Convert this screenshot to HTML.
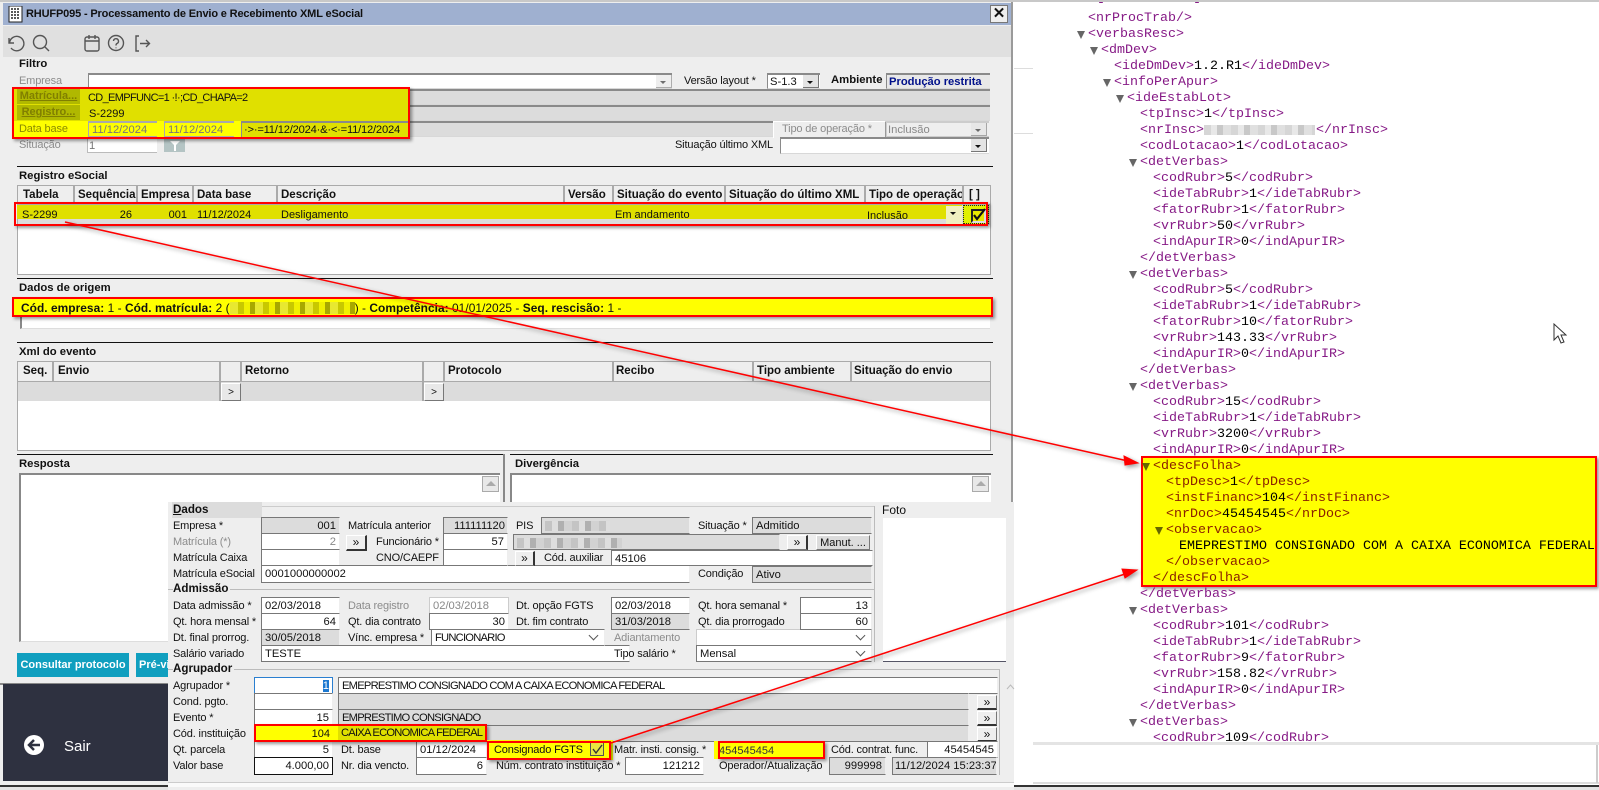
<!DOCTYPE html>
<html><head><meta charset="utf-8"><title>RHUFP095</title>
<style>
html,body{margin:0;padding:0;background:#fff}
#p{position:relative;width:1599px;height:790px;overflow:hidden;background:#fff;font:11px "Liberation Sans",sans-serif;color:#111}
#p div,#p span.a{position:absolute;box-sizing:border-box}
.l{white-space:nowrap;height:14px;line-height:14px;margin-top:1px;letter-spacing:-.15px}
.h{font-weight:bold;font-size:11.3px;white-space:nowrap;height:14px;line-height:14px;color:#111}
.d{color:#8c8c8c}
.f{background:#fff;border-top:2px solid #8a8a8a;border-left:1px solid #8a8a8a;border-bottom:1px solid #d8d8d8;padding:0 3px;line-height:14px;white-space:nowrap;overflow:hidden;font-size:11.2px}
.o{background:#fff;border-top:1px solid #777;border-left:1px solid #777;border-bottom:1px solid #777;border-right:1px solid #eee;padding:0 3px;line-height:16px;white-space:nowrap;overflow:hidden;font-size:11.2px}
.u{letter-spacing:-.78px}
.g{background:#dcdcdc}
.r{text-align:right}
.e{background:#eee;border-color:#ccc}
.b{background:#e8e8e8;border-right:1px solid #777;border-bottom:1px solid #777;border-top:1px solid #fff;border-left:1px solid #fff;text-align:center;font-size:12px;line-height:12px}
.s{height:1px;background:#111}
.rb{border:2px solid #f00;box-shadow:2px 2px 3px rgba(0,0,0,.4)}
.c{border-right:2px solid #aaa;height:19px;top:0}
.hd{font-weight:bold;font-size:11.5px;white-space:nowrap;line-height:14px;height:14px}
.x{font:13.33px/16px "Liberation Mono",monospace;color:#861a86;white-space:pre;height:16px}
.x em{font-style:normal;color:#000}
.t{width:0;height:0;border-left:4.500px solid transparent;border-right:4.500px solid transparent;border-top:8px solid #666;margin-left:-11px;margin-top:4px;top:0}
.dd{background:#e4e4e4;border-right:1px solid #777;border-bottom:1px solid #777;width:16px;height:13px}
.dd:after{content:"";position:absolute;left:4px;top:6px;width:0;height:0;border-left:3px solid transparent;border-right:3px solid transparent;border-top:3px solid #111}
.ch:after{content:"";position:absolute;right:7px;top:2px;width:6px;height:6px;border-right:1px solid #555;border-bottom:1px solid #555;transform:rotate(45deg)}
.bl{background:repeating-linear-gradient(90deg,#c4c4c4 0 7px,#dedede 7px 13px,#b0b0b0 13px 19px,#d2d2d2 19px 27px)}
.sb{width:17px;height:16px;background:#e8e8e8;border:1px solid #aaa}
.sb:after{content:"";position:absolute;left:3px;top:4px;width:0;height:0;border-left:5px solid transparent;border-right:5px solid transparent;border-bottom:5px solid #aaa}
.bt{background:#109fbf;color:#fff;font:bold 11px/24px "Liberation Sans",sans-serif;white-space:nowrap;overflow:hidden}
</style></head><body><div id="p">

<!-- main window -->
<div style="left:0;top:0;width:1013px;height:790px;background:#eee;border-right:2px solid #9a9a9a"></div>
<div style="left:0;top:0;width:1599px;height:2px;background:#c8c8c8"></div>
<div style="left:3px;top:3px;width:1008px;height:22px;background:#9fb0d0"></div>
<svg style="position:absolute;left:8px;top:6px" width="16" height="17"><rect x="1" y="0" width="13" height="16" fill="#fff" stroke="#222"/><path d="M3 3h9M3 6h9M3 9h9M3 12h9" stroke="#222" stroke-width="1.600" stroke-dasharray="2 1"/></svg>
<div class="h" style="left:26px;top:7px;font-size:11px;letter-spacing:-.15px">RHUFP095 - Processamento de Envio e Recebimento XML eSocial</div>
<div style="left:990px;top:5px;width:18px;height:18px;background:#eee;border:1px solid #777;font:bold 15px/16px 'Liberation Sans';text-align:center">✕</div>
<div style="left:3px;top:26px;width:1008px;height:31px;background:#e0e0e0"></div>
<svg style="position:absolute;left:5px;top:33px" width="150" height="20" fill="none" stroke="#555" stroke-width="1.400"><path d="M4 5v5h5M4.500 10a7.200 7.200 0 1 1 1.500 5"/><circle cx="35" cy="9" r="6.500"/><path d="M40 14l4 4"/><rect x="80" y="4" width="14" height="14" rx="2"/><path d="M80 8h14M84 2v4M90 2v4"/><circle cx="111" cy="10" r="7.500"/><path d="M108.500 8a2.500 2.500 0 1 1 3.500 2.500c-.8.4-1 .8-1 2M111 14.500v.8"/><path d="M134 3h-3v15h3M135 10.500h9M141 7l3.500 3.500-3.500 3.500"/></svg>

<!-- filtro -->
<div class="h" style="left:19px;top:57px">Filtro</div>
<div class="l d" style="left:19px;top:73px">Empresa</div>
<div class="f" style="left:88px;top:73px;width:584px;height:16px"></div>
<div class="dd" style="left:656px;top:75px;opacity:.6"></div>
<div class="l" style="left:684px;top:73px">Versão layout *</div>
<div class="f" style="left:767px;top:73px;width:53px;height:16px;padding-left:2px">S-1.3</div>
<div class="dd" style="left:803px;top:75px"></div>
<div class="h" style="left:831px;top:73px">Ambiente</div>
<div class="f g" style="left:886px;top:73px;width:104px;height:16px;background:#e8e8e8;color:#00108a;font-weight:bold;padding-left:2px">Produção restrita</div>

<div class="f g" style="left:88px;top:89px;width:902px;height:16px"></div>
<div class="f g" style="left:88px;top:105px;width:902px;height:16px"></div>
<div class="f g" style="left:241px;top:121px;width:532px;height:16px"></div>
<div class="l d" style="left:19px;top:121px">Data base</div>
<div class="l d" style="left:782px;top:121px">Tipo de operação *</div>
<div class="f e" style="left:886px;top:121px;width:103px;height:16px;color:#888;padding-left:1px">Inclusão</div>
<div class="dd" style="left:971px;top:123px;opacity:.6"></div>
<div style="left:773px;top:121px;width:113px;height:17px;border-top:1px solid #fff;border-left:1px solid #fff;border-right:1px solid #999"></div>
<div class="l d" style="left:19px;top:137px">Situação</div>
<div class="f e" style="left:87px;top:137px;width:70px;height:16px;color:#777;background:#fff;border-color:#bbb;padding-left:1px">1</div>
<div style="left:164px;top:139px;width:21px;height:13px;background:#b4c4c4"></div>
<svg style="position:absolute;left:170px;top:141px" width="10" height="10"><path d="M0 0h10L6 4v6H4V4z" fill="#fff"/></svg>
<div class="l" style="left:675px;top:137px">Situação último XML</div>
<div class="f" style="left:780px;top:137px;width:209px;height:17px"></div>
<div class="dd" style="left:971px;top:139px"></div>

<!-- registro -->
<div class="s" style="left:17px;top:166px;width:976px"></div>
<div class="h" style="left:19px;top:169px">Registro eSocial</div>
<div style="left:17px;top:185px;width:974px;height:90px;background:#fff;border:1px solid #aaa">
 <div style="left:0;top:0;width:972px;height:19px;background:#eee;border-bottom:1px solid #aaa"></div>
 <div style="left:0;top:19px;width:972px;height:20px;background:#dcdcdc"></div>
 <div class="c" style="left:55px"></div><div class="c" style="left:118px"></div><div class="c" style="left:174px"></div><div class="c" style="left:258px"></div><div class="c" style="left:545px"></div><div class="c" style="left:594px"></div><div class="c" style="left:706px"></div><div class="c" style="left:846px"></div><div class="c" style="left:944px"></div>
</div>
<div class="hd" style="left:23px;top:188px">Tabela</div><div class="hd" style="left:78px;top:188px">Sequência</div><div class="hd" style="left:141px;top:188px">Empresa</div><div class="hd" style="left:197px;top:188px">Data base</div><div class="hd" style="left:281px;top:188px">Descrição</div><div class="hd" style="left:568px;top:188px">Versão</div><div class="hd" style="left:617px;top:188px">Situação do evento</div><div class="hd" style="left:729px;top:188px">Situação do último XML</div><div class="hd" style="left:869px;top:188px;width:93px;overflow:hidden">Tipo de operação</div><div class="hd" style="left:969px;top:188px">[ ]</div>

<!-- dados origem -->
<div class="s" style="left:17px;top:278px;width:976px"></div>
<div class="h" style="left:19px;top:281px">Dados de origem</div>
<div style="left:20px;top:298px;width:970px;height:31px;background:#fff;border-left:2px solid #888;border-bottom:1px solid #ddd"></div>

<!-- xml evento -->
<div class="s" style="left:17px;top:342px;width:976px"></div>
<div class="h" style="left:19px;top:345px">Xml do evento</div>
<div style="left:17px;top:361px;width:974px;height:90px;background:#fff;border:1px solid #aaa">
 <div style="left:0;top:0;width:972px;height:20px;background:#eee;border-bottom:1px solid #aaa"></div>
 <div style="left:0;top:20px;width:972px;height:19px;background:#dcdcdc"></div>
 <div class="c" style="left:34px;height:20px"></div><div class="c" style="left:201px;height:39px"></div><div class="c" style="left:222px;height:20px"></div><div class="c" style="left:404px;height:39px"></div><div class="c" style="left:425px;height:20px"></div><div class="c" style="left:594px;height:20px"></div><div class="c" style="left:734px;height:20px"></div><div class="c" style="left:832px;height:20px"></div>
 <div class="b" style="left:203px;top:21px;width:20px;height:18px;line-height:17px;background:#e8e8e8;font-size:10px">&gt;</div>
 <div class="b" style="left:406px;top:21px;width:20px;height:18px;line-height:17px;background:#e8e8e8;font-size:10px">&gt;</div>
</div>
<div class="hd" style="left:23px;top:364px">Seq.</div><div class="hd" style="left:58px;top:364px">Envio</div><div class="hd" style="left:245px;top:364px">Retorno</div><div class="hd" style="left:448px;top:364px">Protocolo</div><div class="hd" style="left:616px;top:364px">Recibo</div><div class="hd" style="left:757px;top:364px">Tipo ambiente</div><div class="hd" style="left:854px;top:364px">Situação do envio</div>

<!-- resposta -->
<div class="s" style="left:17px;top:454px;width:486px"></div>
<div class="s" style="left:510px;top:454px;width:483px"></div>
<div class="h" style="left:19px;top:457px">Resposta</div>
<div class="h" style="left:515px;top:457px">Divergência</div>
<div style="left:503px;top:454px;width:2px;height:50px;background:#888"></div>
<div style="left:19px;top:473px;width:481px;height:169px;background:#fff;border-top:2px solid #888;border-left:2px solid #888;border-bottom:1px solid #ddd"></div>
<div style="left:510px;top:473px;width:481px;height:40px;background:#fff;border-top:2px solid #888;border-left:2px solid #888"></div>
<div class="sb" style="left:482px;top:476px"></div>
<div class="sb" style="left:972px;top:476px"></div>

<div class="bt" style="left:17px;top:653px;width:112px;height:24px;text-align:center">Consultar protocolo</div>
<div class="bt" style="left:136px;top:653px;width:36px;height:24px;padding-left:3px">Pré-vi</div>

<div style="left:0;top:683px;width:170px;height:2px;background:#888"></div>
<div style="left:3px;top:684px;width:167px;height:97px;background:#2e3140"></div>
<div style="left:0;top:785px;width:1599px;height:2px;background:#333"></div>
<div style="left:0;top:787px;width:1599px;height:3px;background:#e4e4e4"></div>
<svg style="position:absolute;left:24px;top:735px" width="20" height="20"><circle cx="10" cy="10" r="10" fill="#fff"/><path d="M16 10H6M10 5l-5 5 5 5" stroke="#2e3140" stroke-width="2.500" fill="none"/></svg>
<div class="l" style="left:64px;top:737px;color:#fff;font-size:15px;height:18px;line-height:18px;letter-spacing:0">Sair</div>

<!-- overlay -->
<div style="left:168px;top:502px;width:846px;height:288px;background:#eee"></div>
<div style="left:168px;top:783px;width:846px;height:4px;background:#fafafa"></div>
<div style="left:172px;top:502px;width:90px;height:16px;background:#dcdcdc"></div>
<div class="h" style="left:173px;top:502px;font-size:11.600px;height:16px;line-height:16px"><span style="text-decoration:underline">D</span>ados</div>
<div style="left:262px;top:506px;width:612px;height:1px;background:#ccc"></div>
<div style="left:874px;top:506px;width:1px;height:156px;background:#bbb"></div>
<div class="l" style="left:880px;top:501px;font-size:12px;height:16px;line-height:16px;background:#eee;padding:0 2px;letter-spacing:0">Foto</div>
<div style="left:883px;top:518px;width:123px;height:144px;background:#fff;border-bottom:1px solid #556"></div>
<svg style="position:absolute;left:1006px;top:684px" width="9" height="6"><path d="M1 5l3.500-4L8 5" stroke="#bbb" fill="none"/></svg>

<div class="l" style="left:173px;top:518px">Empresa *</div><div class="o g r" style="left:261px;top:517px;width:79px;height:17px">001</div>
<div class="l d" style="left:173px;top:534px">Matrícula (*)</div><div class="o r" style="left:261px;top:533px;width:79px;height:17px;color:#888">2</div>
<div class="l" style="left:173px;top:550px">Matrícula Caixa</div><div class="o" style="left:261px;top:549px;width:79px;height:17px"></div>
<div class="l" style="left:173px;top:566px">Matrícula eSocial</div><div class="o" style="left:261px;top:565px;width:429px;height:18px">0001000000002</div>
<div class="l" style="left:348px;top:518px">Matrícula anterior</div><div class="o g r" style="left:443px;top:517px;width:65px;height:17px;padding-right:2px">111111120</div>
<div class="b" style="left:346px;top:535px;width:21px;height:16px;line-height:13px;background:#eee;border-right:2px solid #333;border-bottom:2px solid #333">»</div>
<div class="l" style="left:376px;top:534px">Funcionário *</div><div class="o r" style="left:443px;top:533px;width:65px;height:17px">57</div>
<div class="l" style="left:376px;top:550px">CNO/CAEPF</div><div class="o" style="left:443px;top:549px;width:65px;height:17px"></div>
<div class="l" style="left:516px;top:518px">PIS</div><div class="o g" style="left:541px;top:517px;width:149px;height:17px"></div>
<div class="bl" style="left:545px;top:521px;width:65px;height:10px"></div>
<div class="o g" style="left:513px;top:534px;width:267px;height:16px"></div>
<div class="bl" style="left:517px;top:538px;width:105px;height:10px"></div>
<div class="b" style="left:787px;top:535px;width:21px;height:15px;line-height:13px;background:#eee;border-right:2px solid #333">»</div>
<div class="b g" style="left:816px;top:535px;width:54px;height:15px;line-height:14px;background:#dcdcdc;font-size:11px">Manut. ...</div>
<div class="b" style="left:515px;top:551px;width:20px;height:15px;line-height:13px;background:#eee;border-right:2px solid #333">»</div>
<div class="l" style="left:544px;top:550px">Cód. auxiliar</div><div class="o" style="left:611px;top:550px;width:262px;height:16px">45106</div>
<div class="l" style="left:698px;top:518px">Situação *</div><div class="o g" style="left:752px;top:517px;width:120px;height:17px">Admitido</div>
<div class="l" style="left:698px;top:566px">Condição</div><div class="o g" style="left:752px;top:566px;width:120px;height:17px">Ativo</div>

<div style="left:168px;top:589px;width:706px;height:1px;background:#bbb"></div>
<div class="h" style="left:173px;top:582px;font-size:11.600px;background:#eee;padding-right:2px;height:15px">Admissão</div>
<div class="l" style="left:173px;top:598px">Data admissão *</div><div class="o" style="left:261px;top:597px;width:79px;height:17px">02/03/2018</div>
<div class="l" style="left:173px;top:614px">Qt. hora mensal *</div><div class="o r" style="left:261px;top:613px;width:79px;height:17px">64</div>
<div class="l" style="left:173px;top:630px">Dt. final prorrog.</div><div class="o g" style="left:261px;top:629px;width:79px;height:17px">30/05/2018</div>
<div class="l" style="left:173px;top:646px">Salário variado</div><div class="o" style="left:261px;top:645px;width:369px;height:17px">TESTE</div>
<div class="l d" style="left:348px;top:598px">Data registro</div><div class="o" style="left:429px;top:597px;width:80px;height:17px;color:#888;border-color:#ccc">02/03/2018</div>
<div class="l" style="left:348px;top:614px">Qt. dia contrato</div><div class="o r" style="left:429px;top:613px;width:80px;height:17px">30</div>
<div class="l" style="left:348px;top:630px">Vínc. empresa *</div><div class="o ch u" style="left:431px;top:629px;width:174px;height:17px">FUNCIONARIO</div>
<div class="l" style="left:516px;top:598px">Dt. opção FGTS</div><div class="o" style="left:611px;top:597px;width:79px;height:17px">02/03/2018</div>
<div class="l" style="left:516px;top:614px">Dt. fim contrato</div><div class="o g" style="left:611px;top:613px;width:79px;height:17px">31/03/2018</div>
<div class="l d" style="left:614px;top:630px">Adiantamento</div><div class="o ch" style="left:696px;top:629px;width:176px;height:17px;border-color:#ccc"></div>
<div class="l" style="left:614px;top:646px">Tipo salário *</div><div class="o ch" style="left:696px;top:645px;width:176px;height:17px">Mensal</div>
<div class="l" style="left:698px;top:598px">Qt. hora semanal *</div><div class="o r" style="left:800px;top:597px;width:72px;height:17px">13</div>
<div class="l" style="left:698px;top:614px">Qt. dia prorrogado</div><div class="o r" style="left:800px;top:613px;width:72px;height:17px">60</div>

<div style="left:168px;top:669px;width:832px;height:1px;background:#bbb"></div>
<div style="left:999px;top:669px;width:1px;height:106px;background:#bbb"></div>
<div style="left:168px;top:782px;width:846px;height:1px;background:#ccc"></div>
<div class="h" style="left:173px;top:662px;font-size:11.600px;background:#eee;padding-right:2px;height:15px">Agrupador</div>
<div class="l" style="left:173px;top:678px">Agrupador *</div><div class="o r" style="left:254px;top:677px;width:79px;height:17px;border-color:#2a7fd0;border-bottom-color:#777"><span style="background:#1c78d0;color:#fff">1</span></div>
<div class="l" style="left:173px;top:694px">Cond. pgto.</div><div class="o" style="left:254px;top:693px;width:79px;height:17px"></div>
<div class="l" style="left:173px;top:710px">Evento *</div><div class="o r" style="left:254px;top:709px;width:79px;height:17px">15</div>
<div class="l" style="left:173px;top:726px">Cód. instituição</div>
<div class="l" style="left:173px;top:742px">Qt. parcela</div><div class="o r" style="left:254px;top:741px;width:79px;height:17px">5</div>
<div class="l" style="left:173px;top:758px">Valor base</div><div class="o r" style="left:254px;top:757px;width:79px;height:18px;border:1px solid #111">4.000,00</div>
<div class="o u" style="left:338px;top:677px;width:660px;height:17px">EMEPRESTIMO CONSIGNADO COM A CAIXA ECONOMICA FEDERAL</div>
<div class="o g" style="left:338px;top:693px;width:631px;height:17px"></div>
<div class="o g u" style="left:338px;top:709px;width:631px;height:17px">EMPRESTIMO CONSIGNADO</div>
<div class="o g" style="left:338px;top:725px;width:631px;height:17px"></div>
<div class="b" style="left:977px;top:695px;width:20px;height:15px;line-height:13px;background:#eee;border-bottom:2px solid #333">»</div>
<div class="b" style="left:977px;top:711px;width:20px;height:15px;line-height:13px;background:#eee;border-bottom:2px solid #333">»</div>
<div class="b" style="left:977px;top:727px;width:20px;height:15px;line-height:13px;background:#eee;border-bottom:2px solid #333">»</div>
<div class="l" style="left:341px;top:742px">Dt. base</div><div class="o" style="left:416px;top:741px;width:71px;height:17px">01/12/2024</div>
<div class="l" style="left:341px;top:758px">Nr. dia vencto.</div><div class="o r" style="left:416px;top:757px;width:71px;height:18px">6</div>
<div class="l" style="left:614px;top:742px">Matr. insti. consig. *</div>
<div class="l" style="left:831px;top:742px">Cód. contrat. func.</div><div class="o r" style="left:927px;top:741px;width:71px;height:17px">45454545</div>
<div class="l" style="left:496px;top:758px">Núm. contrato instituição *</div><div class="o r" style="left:625px;top:757px;width:79px;height:18px">121212</div>
<div class="l" style="left:719px;top:758px">Operador/Atualização</div><div class="o g r" style="left:829px;top:757px;width:57px;height:18px">999998</div>
<div class="o g" style="left:892px;top:757px;width:105px;height:18px;padding-left:2px">11/12/2024 15:23:37</div>

<!-- right side extras -->
<div style="left:1014px;top:68px;width:19px;height:1px;background:#ddd"></div>
<div style="left:1014px;top:133px;width:19px;height:1px;background:#ddd"></div>
<div style="left:1033px;top:742px;width:566px;height:3px;background:#e4e4e4"></div>
<div style="left:1033px;top:782px;width:566px;height:2px;background:#ddd"></div>
<div style="left:1596px;top:745px;width:2px;height:38px;background:#ccc"></div>

<div class="rb" style="left:1141px;top:456px;width:456px;height:131px;background:#ff0"></div>

<!-- xml -->
<div style="left:0;top:1px;width:0;height:0">
<div class="x" style="left:1097px;top:-5px">-</div><div class="x" style="left:1193px;top:-5px">-</div>
<div class="x" style="left:1088px;top:10px">&lt;nrProcTrab/&gt;</div>
<div class="x" style="left:1088px;top:26px"><span class="t a"></span>&lt;verbasResc&gt;</div>
<div class="x" style="left:1101px;top:42px"><span class="t a"></span>&lt;dmDev&gt;</div>
<div class="x" style="left:1114px;top:58px">&lt;ideDmDev&gt;<em>1.2.R1</em>&lt;/ideDmDev&gt;</div>
<div class="x" style="left:1114px;top:74px"><span class="t a"></span>&lt;infoPerApur&gt;</div>
<div class="x" style="left:1127px;top:90px"><span class="t a"></span>&lt;ideEstabLot&gt;</div>
<div class="x" style="left:1140px;top:106px">&lt;tpInsc&gt;<em>1</em>&lt;/tpInsc&gt;</div>
<div class="x" style="left:1140px;top:122px">&lt;nrInsc&gt;<span style="display:inline-block;width:112px"></span>&lt;/nrInsc&gt;</div>
<div class="bl" style="left:1204px;top:124px;width:111px;height:10px;opacity:.7"></div>
<div class="x" style="left:1140px;top:138px">&lt;codLotacao&gt;<em>1</em>&lt;/codLotacao&gt;</div>
<div class="x" style="left:1140px;top:154px"><span class="t a"></span>&lt;detVerbas&gt;</div>
<div class="x" style="left:1153px;top:170px">&lt;codRubr&gt;<em>5</em>&lt;/codRubr&gt;</div>
<div class="x" style="left:1153px;top:186px">&lt;ideTabRubr&gt;<em>1</em>&lt;/ideTabRubr&gt;</div>
<div class="x" style="left:1153px;top:202px">&lt;fatorRubr&gt;<em>1</em>&lt;/fatorRubr&gt;</div>
<div class="x" style="left:1153px;top:218px">&lt;vrRubr&gt;<em>50</em>&lt;/vrRubr&gt;</div>
<div class="x" style="left:1153px;top:234px">&lt;indApurIR&gt;<em>0</em>&lt;/indApurIR&gt;</div>
<div class="x" style="left:1140px;top:250px">&lt;/detVerbas&gt;</div>
<div class="x" style="left:1140px;top:266px"><span class="t a"></span>&lt;detVerbas&gt;</div>
<div class="x" style="left:1153px;top:282px">&lt;codRubr&gt;<em>5</em>&lt;/codRubr&gt;</div>
<div class="x" style="left:1153px;top:298px">&lt;ideTabRubr&gt;<em>1</em>&lt;/ideTabRubr&gt;</div>
<div class="x" style="left:1153px;top:314px">&lt;fatorRubr&gt;<em>10</em>&lt;/fatorRubr&gt;</div>
<div class="x" style="left:1153px;top:330px">&lt;vrRubr&gt;<em>143.33</em>&lt;/vrRubr&gt;</div>
<div class="x" style="left:1153px;top:346px">&lt;indApurIR&gt;<em>0</em>&lt;/indApurIR&gt;</div>
<div class="x" style="left:1140px;top:362px">&lt;/detVerbas&gt;</div>
<div class="x" style="left:1140px;top:378px"><span class="t a"></span>&lt;detVerbas&gt;</div>
<div class="x" style="left:1153px;top:394px">&lt;codRubr&gt;<em>15</em>&lt;/codRubr&gt;</div>
<div class="x" style="left:1153px;top:410px">&lt;ideTabRubr&gt;<em>1</em>&lt;/ideTabRubr&gt;</div>
<div class="x" style="left:1153px;top:426px">&lt;vrRubr&gt;<em>3200</em>&lt;/vrRubr&gt;</div>
<div class="x" style="left:1153px;top:442px">&lt;indApurIR&gt;<em>0</em>&lt;/indApurIR&gt;</div>
<div class="x" style="left:1153px;top:458px;color:#8a2000"><span class="t a" style="border-top-color:#666600"></span>&lt;descFolha&gt;</div>
<div class="x" style="left:1166px;top:474px;color:#8a2000">&lt;tpDesc&gt;<em>1</em>&lt;/tpDesc&gt;</div>
<div class="x" style="left:1166px;top:490px;color:#8a2000">&lt;instFinanc&gt;<em>104</em>&lt;/instFinanc&gt;</div>
<div class="x" style="left:1166px;top:506px;color:#8a2000">&lt;nrDoc&gt;<em>45454545</em>&lt;/nrDoc&gt;</div>
<div class="x" style="left:1166px;top:522px;color:#8a2000"><span class="t a" style="border-top-color:#666600"></span>&lt;observacao&gt;</div>
<div class="x" style="left:1179px;top:538px"><em>EMEPRESTIMO CONSIGNADO COM A CAIXA ECONOMICA FEDERAL</em></div>
<div class="x" style="left:1166px;top:554px;color:#8a2000">&lt;/observacao&gt;</div>
<div class="x" style="left:1153px;top:570px;color:#8a2000">&lt;/descFolha&gt;</div>
<div class="x" style="left:1140px;top:586px">&lt;/detVerbas&gt;</div>
<div class="x" style="left:1140px;top:602px"><span class="t a"></span>&lt;detVerbas&gt;</div>
<div class="x" style="left:1153px;top:618px">&lt;codRubr&gt;<em>101</em>&lt;/codRubr&gt;</div>
<div class="x" style="left:1153px;top:634px">&lt;ideTabRubr&gt;<em>1</em>&lt;/ideTabRubr&gt;</div>
<div class="x" style="left:1153px;top:650px">&lt;fatorRubr&gt;<em>9</em>&lt;/fatorRubr&gt;</div>
<div class="x" style="left:1153px;top:666px">&lt;vrRubr&gt;<em>158.82</em>&lt;/vrRubr&gt;</div>
<div class="x" style="left:1153px;top:682px">&lt;indApurIR&gt;<em>0</em>&lt;/indApurIR&gt;</div>
<div class="x" style="left:1140px;top:698px">&lt;/detVerbas&gt;</div>
<div class="x" style="left:1140px;top:714px"><span class="t a"></span>&lt;detVerbas&gt;</div>
<div style="left:1153px;top:730px;height:11px;width:300px;overflow:hidden"><div class="x" style="left:0;top:0">&lt;codRubr&gt;<em>109</em>&lt;/codRubr&gt;</div></div>
</div>

<svg style="position:absolute;left:1553px;top:323px" width="14" height="22"><path d="M1 1v16l4-4 3 7 3-1-3-7h5z" fill="#fff" stroke="#333"/></svg>

<!-- highlights -->
<div style="left:14px;top:89px;width:394px;height:32px;background:#e0e000"></div>
<div style="left:17px;top:89px;width:63px;height:15px;background:#b0b800;color:#807f00;font:bold 11px/15px 'Liberation Sans';text-align:center;text-decoration:underline">Matrícula...</div>
<div style="left:17px;top:105px;width:63px;height:15px;background:#b0b800;color:#807f00;font:bold 11px/15px 'Liberation Sans';text-align:center;text-decoration:underline">Registro...</div>
<div class="l" style="left:88px;top:90px;letter-spacing:-.65px">CD_EMPFUNC=1 ·!·;CD_CHAPA=2</div>
<div class="l" style="left:89px;top:106px;letter-spacing:0">S-2299</div>
<div style="left:14px;top:121px;width:394px;height:16px;background:#ff0"></div>
<div class="l" style="left:19px;top:121px;color:#8a8a00">Data base</div>
<div class="f" style="left:88px;top:121px;width:69px;height:16px;color:#777;background:#ff0;border-color:#aaa">11/12/2024</div>
<div class="f" style="left:164px;top:121px;width:70px;height:16px;color:#777;background:#ff0;border-color:#aaa">11/12/2024</div>
<div class="f" style="left:241px;top:121px;width:167px;height:16px;background:#e0e000;border-bottom:0;padding-left:2px;letter-spacing:-.22px">·&gt;·=11/12/2024·&amp;·&lt;·=11/12/2024</div>
<div class="rb" style="left:12px;top:87px;width:398px;height:52px"></div>

<div style="left:17px;top:205px;width:945px;height:14px;background:#e0e000"></div>
<div class="l" style="left:22px;top:207px;letter-spacing:0">S-2299</div><div class="l r" style="left:100px;top:207px;width:32px;letter-spacing:0">26</div><div class="l r" style="left:150px;top:207px;width:37px;letter-spacing:0">001</div><div class="l" style="left:197px;top:207px;letter-spacing:0">11/12/2024</div><div class="l" style="left:281px;top:207px;letter-spacing:0">Desligamento</div><div class="l" style="left:615px;top:207px;letter-spacing:0">Em andamento</div><div class="l" style="left:867px;top:208px;letter-spacing:0">Inclusão</div>
<div class="dd" style="left:946px;top:206px;width:16px;height:18px;background:#f0f0c0;border:0"></div>
<div style="left:963px;top:205px;width:26px;height:19px;background:#e0f000;border:1px dotted #222"></div>
<div style="left:971px;top:209px;width:15px;height:14px;background:#e8e800;border:2px solid #222;border-right-color:#ddd;border-bottom-color:#ddd"></div>
<svg style="position:absolute;left:971px;top:206px" width="16" height="16"><path d="M3 9l3 4 8-10" stroke="#111" stroke-width="2.200" fill="none"/></svg>
<div class="rb" style="left:14px;top:202px;width:974px;height:24px"></div>

<div class="rb" style="left:12px;top:297px;width:981px;height:20px;background:#ff0"></div>
<div class="l" style="left:21px;top:300px;font-size:11.900px;letter-spacing:.05px"><b>Cód. empresa:</b> 1 - <b>Cód. matrícula:</b> 2 (<span style="display:inline-block;vertical-align:top;margin-top:1px;width:125px;height:12px;background:repeating-linear-gradient(90deg,#e8e830 0 8px,#c8c800 8px 14px,#f0f000 14px 20px,#a8a800 20px 25px)"></span>) - <b>Competência:</b> 01/01/2025 - <b>Seq. rescisão:</b> 1 -</div>

<div style="left:254px;top:725px;width:232px;height:16px;background:#ff0"></div>
<div class="f u" style="left:338px;top:725px;width:148px;height:16px;background:#e0e000;border:0;padding-left:3px;line-height:16px">CAIXA ECONOMICA FEDERAL</div>
<div class="l r" style="left:254px;top:726px;width:76px;letter-spacing:0">104</div>
<div class="rb" style="left:254px;top:724px;width:233px;height:18px"></div>

<div style="left:487px;top:740px;width:126px;height:20px;background:#ff0"></div>
<div class="l" style="left:494px;top:742px">Consignado FGTS</div>
<svg style="position:absolute;left:590px;top:742px" width="15" height="15"><rect x=".5" y=".5" width="13" height="13" fill="#e8e840" stroke="#555"/><path d="M3 7l3 4 6-8" stroke="#333" stroke-width="1.400" fill="none"/></svg>
<div class="rb" style="left:487px;top:741px;width:124px;height:19px"></div>

<div style="left:714px;top:741px;width:110px;height:18px;background:#ff0"></div>
<div class="l" style="left:719px;top:743px;color:#333;letter-spacing:0">454545454</div>
<div class="rb" style="left:718px;top:741px;width:107px;height:18px"></div>

<!-- arrows -->
<svg style="position:absolute;left:0;top:0;filter:drop-shadow(2px 2px 2px rgba(0,0,0,.4))" width="1599" height="790"><path d="M65 222L1128 461" stroke="#f00" stroke-width="1.500"/><path d="M1138 463l-14-7 1 9z" fill="#f00" stroke="#f00"/><path d="M611 743L1128 573" stroke="#f00" stroke-width="1.500"/><path d="M1137 570l-15-1 3 9z" fill="#f00" stroke="#f00"/></svg>

</div></body></html>
